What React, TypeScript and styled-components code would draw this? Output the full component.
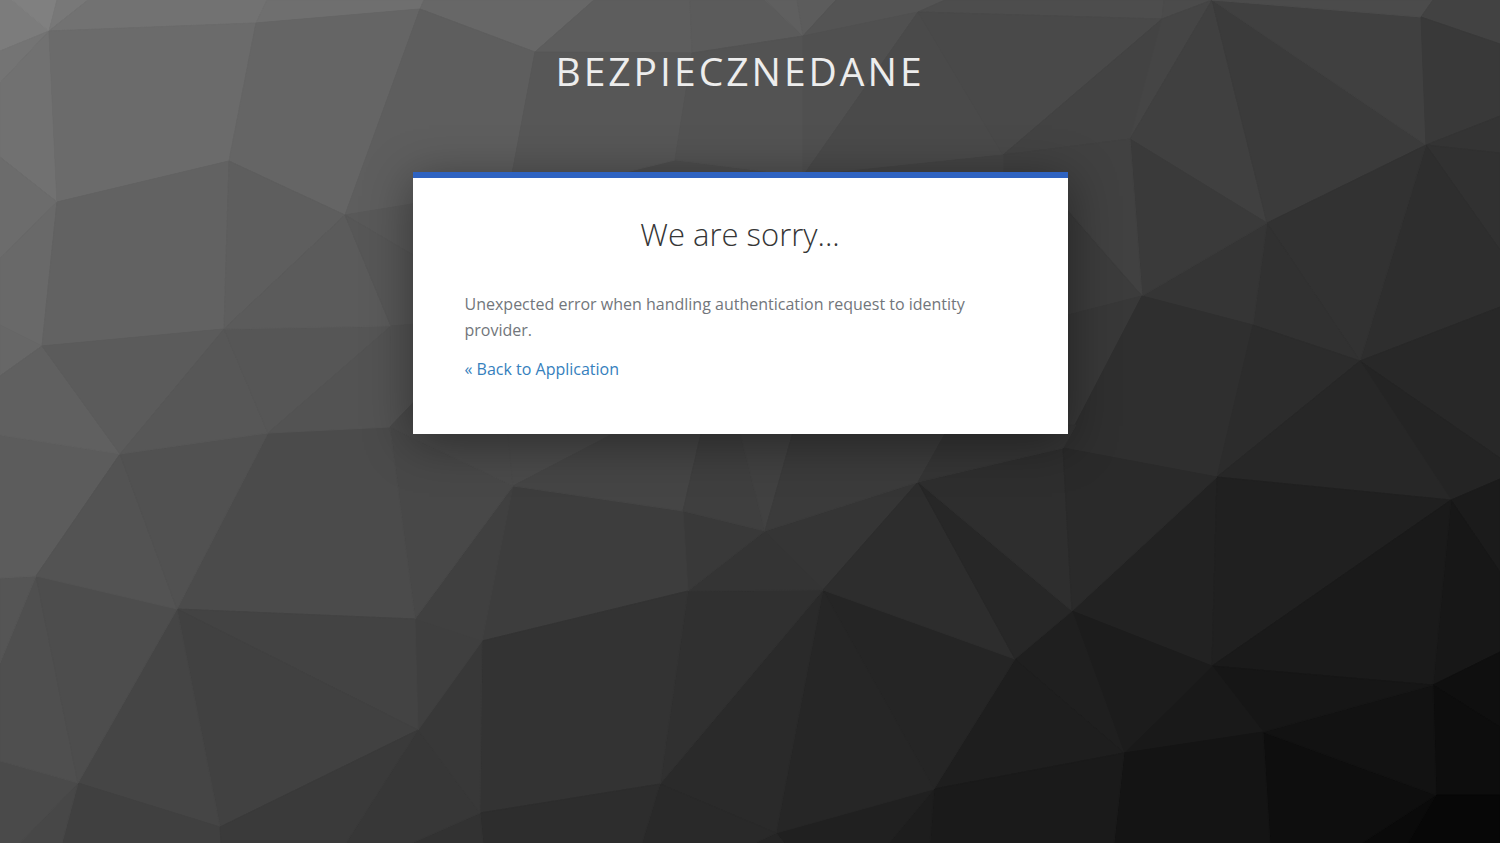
import React from "react";
import styled, { createGlobalStyle } from "styled-components";

const GlobalStyle = createGlobalStyle`
  *, *::before, *::after { box-sizing: border-box; }
  html, body { margin: 0; padding: 0; }
  body {
    background: #3a3a3a;
    font-family: "Open Sans", "Noto Sans", sans-serif;
    font-size: 16px;
    line-height: 26px;
    color: #72767b;
  }
`;

const Page = styled.div`
  position: relative;
  display: flex;
  flex-direction: column;
  align-items: center;
  min-height: 100vh;
  padding: 43px 20px 43px 0;
  overflow: hidden;
`;

const Backdrop = styled.svg`
  position: absolute;
  inset: 0;
  z-index: -1;
  width: 100%;
  height: 100%;
`;

const Brand = styled.header`
  font-size: 39px;
  line-height: 56px;
  font-weight: 500;
  letter-spacing: 3px;
  text-transform: uppercase;
  text-align: center;
  color: #ededed;
`;

const Card = styled.main`
  width: 100%;
  max-width: 655px;
  margin-top: 73px;
  padding: 35px 52px 52px;
  border-top: 6px solid #2f63c1;
  background: #fff;
  box-shadow: 0 8px 45px rgba(0, 0, 0, 0.4);
`;

const Title = styled.h1`
  margin: 0 0 36px;
  font-size: 31px;
  line-height: 42px;
  font-weight: 300;
  text-align: center;
  color: #363636;
`;

const Message = styled.p`
  margin: 0 0 13px;
`;

const BackLink = styled.a`
  color: #3580bd;
  text-decoration: none;
  &:hover { text-decoration: underline; }
`;

/* Each facet: grey level, then its corner points. */
const facets: [number, string][] = [
  [0x7c, "0,0 12,0 49,31 0,51"],
  [0x80, "12,0 57,0 49,31"],
  [0x78, "57,0 88,0 49,31"],
  [0x72, "88,0 267,0 256,23 49,31"],
  [0x6f, "267,0 424,0 420,9 256,23"],
  [0x74, "0,51 49,31 0,83"],
  [0x71, "0,83 49,31 57,202 0,157"],
  [0x6b, "49,31 256,23 229,161 57,202"],
  [0x65, "256,23 420,9 345,215 229,161"],
  [0x6c, "0,157 57,202 0,258"],
  [0x69, "0,258 57,202 42,346 0,325"],
  [0x67, "0,325 42,346 0,376"],
  [0x62, "57,202 229,161 224,329 42,346"],
  [0x5e, "229,161 345,215 224,329"],
  [0x67, "424,0 594,0 535,52 420,9"],
  [0x5e, "420,9 535,52 509,190 345,215"],
  [0x5d, "594,0 690,0 692,53 535,52"],
  [0x5b, "690,0 765,0 803,36 692,53"],
  [0x5f, "765,0 797,0 803,36"],
  [0x5c, "797,0 836,0 803,36"],
  [0x54, "836,0 945,0 918,12 803,36"],
  [0x4d, "945,0 1164,0 1162,19 918,12"],
  [0x4b, "1164,0 1212,0 1162,19"],
  [0x4d, "675,160 803,176 803,190 610,190 610,176"],
  [0x57, "535,52 692,53 675,160 610,176 509,190"],
  [0x53, "692,53 803,36 803,176 675,160"],
  [0x50, "803,36 918,12 803,176"],
  [0x4a, "918,12 1003,155 803,176"],
  [0x49, "918,12 1162,19 1003,155"],
  [0x43, "1162,19 1130,139 1003,155"],
  [0x45, "1162,19 1212,0 1130,139"],
  [0x40, "1212,0 1267,223 1130,139"],
  [0x3b, "1212,0 1426,145 1267,223"],
  [0x40, "1212,0 1421,17 1426,145"],
  [0x4b, "1212,0 1433,0 1421,17"],
  [0x42, "1433,0 1500,0 1500,44 1421,17"],
  [0x39, "1421,17 1500,44 1500,116 1426,145"],
  [0x34, "1426,145 1500,116 1500,153"],
  [0x31, "1426,145 1500,153 1500,250"],
  [0x2e, "1426,145 1500,250 1500,307 1360,361"],
  [0x32, "1267,223 1426,145 1360,361"],
  [0x31, "1267,223 1360,361 1253,325"],
  [0x35, "1267,223 1253,325 1142,296"],
  [0x3a, "1130,139 1267,223 1142,296"],
  [0x41, "1003,155 1130,139 1142,296 1068,210 1003,190"],
  [0x44, "803,176 1003,155 1003,200 803,200"],
  [0x3c, "1060,203 1142,296 1060,317"],
  [0x38, "1060,317 1142,296 1063,448"],
  [0x2f, "1142,296 1253,325 1217,477 1063,448"],
  [0x2c, "1253,325 1360,361 1217,477"],
  [0x28, "1360,361 1500,307 1500,458"],
  [0x24, "1360,361 1500,458 1500,479 1451,500"],
  [0x27, "1360,361 1451,500 1217,477"],
  [0x22, "1217,477 1212,666 1072,611"],
  [0x20, "1217,477 1451,500 1212,666"],
  [0x1b, "1451,500 1500,479 1500,572"],
  [0x17, "1451,500 1500,572 1500,652 1433,685"],
  [0x1a, "1451,500 1433,685 1212,666"],
  [0x0f, "1433,685 1500,652 1500,727"],
  [0x0d, "1433,685 1500,727 1500,795 1436,795"],
  [0x07, "1436,795 1500,795 1500,843 1408,843"],
  [0x0a, "1436,795 1408,843 1362,843"],
  [0x0e, "1263,732 1436,795 1362,843 1270,843"],
  [0x12, "1263,732 1433,685 1436,795"],
  [0x16, "1212,666 1433,685 1263,732"],
  [0x19, "1212,666 1263,732 1124,753"],
  [0x1c, "1072,611 1212,666 1124,753"],
  [0x1f, "1072,611 1124,753 1015,659"],
  [0x1e, "1015,659 1124,753 934,789"],
  [0x14, "1124,753 1263,732 1270,843 1114,843"],
  [0x1a, "934,789 1124,753 1114,843 930,843"],
  [0x1d, "934,789 930,843 889,843"],
  [0x20, "776,833 934,789 889,843 784,843"],
  [0x25, "776,833 784,843 755,843"],
  [0x25, "823,590 1015,659 934,789"],
  [0x26, "823,590 934,789 776,833"],
  [0x2a, "823,590 776,833 660,784"],
  [0x29, "660,784 776,833 755,843 642,843"],
  [0x30, "688,591 823,590 660,784"],
  [0x35, "765,531 918,482 823,590"],
  [0x34, "765,531 823,590 688,591"],
  [0x2d, "918,482 1015,659 823,590"],
  [0x27, "918,482 1072,611 1015,659"],
  [0x2e, "918,482 1063,448 1072,611"],
  [0x2a, "1063,448 1217,477 1072,611"],
  [0x39, "683,511 765,531 688,591"],
  [0x3d, "513,486 683,511 688,591 482,641"],
  [0x33, "482,641 688,591 660,784 480,813"],
  [0x2d, "480,813 660,784 642,843 483,843"],
  [0x32, "480,813 483,843 412,843"],
  [0x37, "418,730 480,813 412,843 346,843"],
  [0x38, "482,641 480,813 418,730"],
  [0x3f, "415,619 482,641 418,730"],
  [0x40, "513,486 482,641 415,619"],
  [0x48, "390,427 513,486 415,619"],
  [0x4b, "268,433 390,427 415,619 177,609"],
  [0x43, "177,609 415,619 418,730"],
  [0x41, "177,609 418,730 220,827"],
  [0x45, "177,609 220,827 78,783"],
  [0x40, "78,783 220,827 221,843 62,843"],
  [0x3a, "220,827 418,730 346,843 221,843"],
  [0x47, "78,783 62,843 20,843"],
  [0x4a, "0,761 78,783 20,843 0,843"],
  [0x4f, "0,663 36,576 78,783 0,761"],
  [0x4d, "36,576 177,609 78,783"],
  [0x55, "0,578 36,576 0,663"],
  [0x5c, "0,435 120,454 36,576 0,578"],
  [0x53, "120,454 177,609 36,576"],
  [0x51, "120,454 268,433 177,609"],
  [0x60, "42,346 120,454 0,435 0,376"],
  [0x5b, "42,346 224,329 120,454"],
  [0x57, "224,329 268,433 120,454"],
  [0x56, "224,329 391,326 268,433"],
  [0x53, "391,326 390,427 268,433"],
  [0x5b, "345,215 391,326 224,329"],
  [0x59, "345,215 430,201 430,265"],
  [0x57, "345,215 430,265 430,323 391,326"],
  [0x53, "391,326 430,323 430,385 390,427"],
  [0x4a, "390,427 430,385 508,430 513,486"],
  [0x4a, "507,425 630,425 513,486"],
  [0x45, "630,425 703,425 683,511 513,486"],
  [0x3f, "703,425 738,425 765,531 683,511"],
  [0x41, "738,425 795,425 765,531"],
  [0x3b, "795,425 950,425 918,482 765,531"],
  [0x35, "950,425 1076,425 1063,448 918,482"],
];

const grey = (level: number) => `rgb(${level}, ${level}, ${level})`;

function LowPolyBackdrop() {
  return (
    <Backdrop viewBox="0 0 1500 843" preserveAspectRatio="xMidYMid slice" aria-hidden="true">
      {facets.map(([level, points]) => (
        <polygon
          key={points}
          points={points}
          fill={grey(level)}
          stroke={grey(level)}
          strokeWidth="1"
          strokeLinejoin="round"
        />
      ))}
    </Backdrop>
  );
}

export default function App() {
  return (
    <>
      <GlobalStyle />
      <Page>
        <LowPolyBackdrop />
        <Brand>BezpieczneDane</Brand>
        <Card>
          <Title>We are sorry...</Title>
          <Message>Unexpected error when handling authentication request to identity provider.</Message>
          <BackLink href="#application">« Back to Application</BackLink>
        </Card>
      </Page>
    </>
  );
}
